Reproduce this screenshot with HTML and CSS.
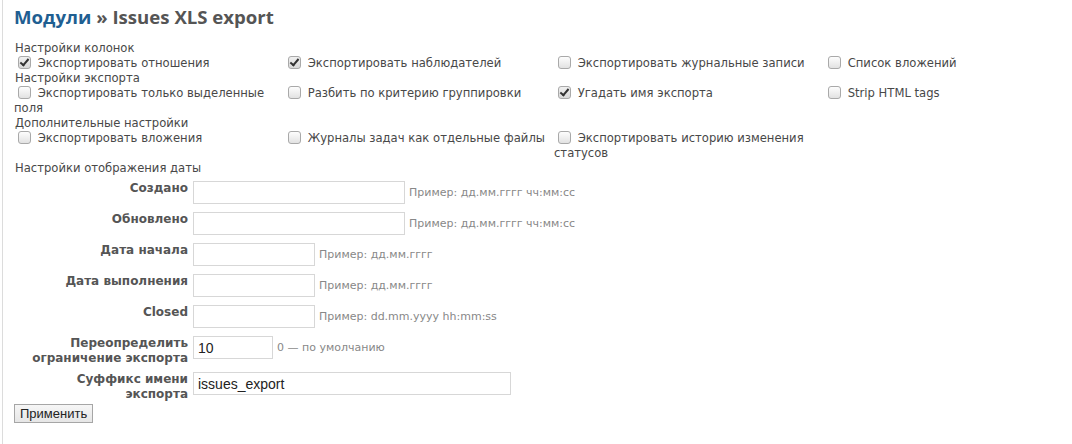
FILE: index.html
```html
<!DOCTYPE html>
<html lang="ru">
<head>
    <meta charset="UTF-8">
    <title>Issues XLS export</title>
    <link rel="stylesheet" href="styles.css">
</head>
<body>
    <div class="content">
        <h2><a href="#">Модули</a> » Issues XLS export</h2>

        <form class="settings">
            <div class="group-title">Настройки колонок</div>
            <div class="checks">
                <label><input type="checkbox" checked> Экспортировать отношения</label>
                <label><input type="checkbox" checked> Экспортировать наблюдателей</label>
                <label><input type="checkbox"> Экспортировать журнальные записи</label>
                <label><input type="checkbox"> Список вложений</label>
            </div>

            <div class="group-title">Настройки экспорта</div>
            <div class="checks">
                <label><input type="checkbox"> Экспортировать только выделенные поля</label>
                <label><input type="checkbox"> Разбить по критерию группировки</label>
                <label><input type="checkbox" checked> Угадать имя экспорта</label>
                <label><input type="checkbox"> Strip HTML tags</label>
            </div>

            <div class="group-title">Дополнительные настройки</div>
            <div class="checks">
                <label><input type="checkbox"> Экспортировать вложения</label>
                <label><input type="checkbox"> Журналы задач как отдельные файлы</label>
                <label><input type="checkbox"> Экспортировать историю изменения статусов</label>
            </div>

            <div class="group-title">Настройки отображения даты</div>
            <div class="fields">
                <div class="field">
                    <label>Создано</label>
                    <input type="text" class="w-long">
                    <span class="hint">Пример: дд.мм.гггг чч:мм:сс</span>
                </div>
                <div class="field">
                    <label>Обновлено</label>
                    <input type="text" class="w-long">
                    <span class="hint">Пример: дд.мм.гггг чч:мм:сс</span>
                </div>
                <div class="field">
                    <label>Дата начала</label>
                    <input type="text" class="w-mid">
                    <span class="hint">Пример: дд.мм.гггг</span>
                </div>
                <div class="field">
                    <label>Дата выполнения</label>
                    <input type="text" class="w-mid">
                    <span class="hint">Пример: дд.мм.гггг</span>
                </div>
                <div class="field">
                    <label>Closed</label>
                    <input type="text" class="w-mid">
                    <span class="hint">Пример: dd.mm.yyyy hh:mm:ss</span>
                </div>
                <div class="field">
                    <label>Переопределить ограничение экспорта</label>
                    <input type="text" class="w-short" value="10">
                    <span class="hint">0 — по умолчанию</span>
                </div>
                <div class="field">
                    <label>Суффикс имени экспорта</label>
                    <input type="text" class="w-wide" value="issues_export">
                </div>
            </div>

            <button type="button" class="btn-apply">Применить</button>
        </form>
    </div>
</body>
</html>
```

FILE: styles.css
```css
* {
    box-sizing: border-box;
}

body {
    margin: 0;
    background: #fff;
    font-family: "DejaVu Sans", Verdana, sans-serif;
    font-size: 11.6px;
    color: #484848;
}

.content {
    margin-left: 2px;
    border-left: 1px solid #dcdcdc;
    min-height: 444px;
    padding: 4px 10px 10px 11px;
}

h2 {
    margin: 0 0 11px 0;
    font-family: "Open Sans", sans-serif;
    font-size: 18.6px;
    font-weight: 700;
    color: #555;
    line-height: 26px;
}

h2 a {
    color: #1f5f92;
    text-decoration: none;
}

.settings {
    line-height: 15px;
}

.group-title {
    padding-left: 1px;
}

.checks {
    display: grid;
    grid-template-columns: repeat(4, 270px);
}

.checks label {
    display: block;
}

.checks input {
    appearance: none;
    -webkit-appearance: none;
    position: relative;
    width: 13px;
    height: 13px;
    margin: -3px 3px -1px 4px;
    vertical-align: middle;
    border: 1px solid #a9a9a9;
    border-radius: 3px;
    background: linear-gradient(#fdfdfd, #e2e2e2);
}

.checks input:checked {
    background: linear-gradient(#f0f0f0, #d8d8d8);
}

.checks input:checked::after {
    content: '';
    position: absolute;
    left: 3px;
    top: 0;
    width: 3px;
    height: 7px;
    border: solid #333;
    border-width: 0 2px 2px 0;
    transform: rotate(40deg);
}

.fields {
    margin-top: 1px;
}

.field {
    display: flex;
    align-items: flex-start;
    padding: 4px 0;
}

.field label {
    width: 175px;
    margin-bottom: -2px;
    padding-right: 1px;
    text-align: right;
    font-size: 12px;
    font-weight: bold;
    color: #555;
    line-height: 15px;
}

.field input {
    height: 23px;
    margin: 0 4px 0 4px;
    padding: 0 4px;
    border: 1px solid #d7d7d7;
    font-family: "Liberation Sans", Arial, sans-serif;
    font-size: 14px;
    color: #222;
}

.w-long { width: 212px; }
.w-mid { width: 122px; }
.w-short { width: 80px; }
.w-wide { width: 318px; }

.hint {
    font-size: 11px;
    color: #888;
    line-height: 23px;
}

.btn-apply {
    margin-top: 0;
    font-family: "Liberation Sans", Arial, sans-serif;
    font-size: 13px;
    color: #222;
    padding: 1px 5px;
    background: linear-gradient(#f6f6f6, #e6e6e6);
    border: 1px solid #a6a6a6;
    border-radius: 0;
}
```
